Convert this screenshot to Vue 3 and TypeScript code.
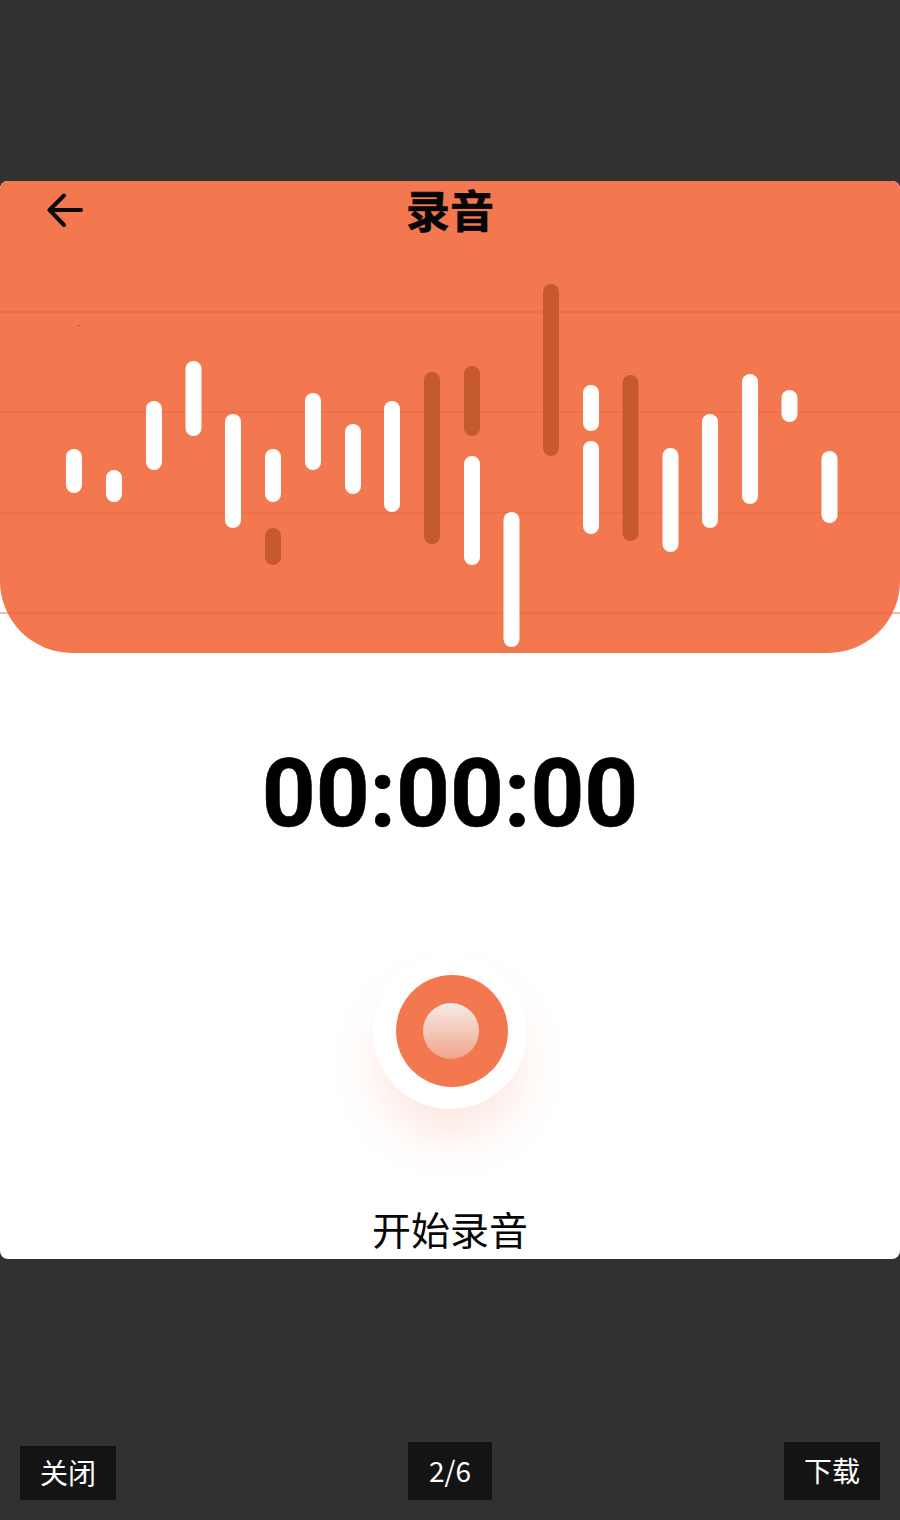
<script setup lang="ts">
// 波形柱：x 为左边，top / bottom 为画布内纵坐标，dark 表示深色柱
interface Bar {
  x: number
  top: number
  bottom: number
  dark?: boolean
}

const bars: Bar[] = [
  { x: 66, top: 268, bottom: 312 },
  { x: 106, top: 289, bottom: 321 },
  { x: 146, top: 220, bottom: 289 },
  { x: 185.5, top: 180, bottom: 255 },
  { x: 225, top: 233, bottom: 347 },
  { x: 265, top: 268, bottom: 321 },
  { x: 265, top: 347, bottom: 384, dark: true },
  { x: 305, top: 212, bottom: 289 },
  { x: 345, top: 243, bottom: 313 },
  { x: 384, top: 220, bottom: 331 },
  { x: 424, top: 191, bottom: 363, dark: true },
  { x: 464, top: 185, bottom: 255, dark: true },
  { x: 464, top: 275, bottom: 384 },
  { x: 503.5, top: 331, bottom: 466 },
  { x: 543, top: 103, bottom: 275, dark: true },
  { x: 583, top: 204, bottom: 250 },
  { x: 583, top: 260, bottom: 353 },
  { x: 622.5, top: 194, bottom: 360, dark: true },
  { x: 662.5, top: 267, bottom: 371 },
  { x: 702, top: 233, bottom: 347 },
  { x: 742, top: 193, bottom: 323 },
  { x: 781.5, top: 209, bottom: 241 },
  { x: 821.5, top: 270, bottom: 342 },
]

// 背景横线的纵坐标
const gridLines = [131, 231, 332, 432]
</script>

<template>
  <div class="page">
    <div class="card">
      <!-- 顶部波形区域 -->
      <section class="hero">
        <header class="nav">
          <svg class="back" viewBox="0 0 36 36" width="36" height="36" fill="none">
            <path d="M34 18H3M17 3.500L2.500 18L17 33" stroke="#0a0a0a" stroke-width="4" stroke-linecap="round" stroke-linejoin="round" />
          </svg>
          <h1 class="title">录音</h1>
        </header>
        <svg class="wave" viewBox="0 0 900 472" width="900" height="472">
          <line v-for="y in gridLines" :key="y" x1="0" x2="900" :y1="y" :y2="y" class="grid" />
          <rect
            v-for="(bar, i) in bars"
            :key="i"
            :x="bar.x"
            :y="bar.top"
            width="16"
            :height="bar.bottom - bar.top"
            rx="8"
            :fill="bar.dark ? '#c55a2c' : '#ffffff'"
          />
          <rect x="78" y="144" width="1" height="1" fill="#7a1030" />
        </svg>
      </section>

      <!-- 计时 -->
      <div class="timer">00:00:00</div>

      <!-- 录音按钮 -->
      <button class="record" type="button">
        <span class="ring"><span class="dot"></span></span>
      </button>
      <div class="label">开始录音</div>
    </div>

    <!-- 底部工具栏 -->
    <footer class="toolbar">
      <div class="tool tool-low">关闭</div>
      <div class="tool tool-count">2/6</div>
      <div class="tool">下载</div>
    </footer>
  </div>
</template>

<style scoped>
.page {
  box-sizing: border-box;
  height: 1520px;
  padding-top: 181px;
  background: #313131;
  display: flex;
  flex-direction: column;
  font-family: "Noto Sans CJK SC", "Liberation Sans", sans-serif;
}

.card {
  height: 1078px;
  background: #ffffff;
  border-radius: 8px;
  display: flex;
  flex-direction: column;
  align-items: center;
}

.hero {
  width: 900px;
  height: 472px;
  flex: none;
  background: #f4784f;
  border-radius: 8px 8px 72px 72px;
  position: relative;
}

.nav {
  position: relative;
  z-index: 1;
  height: 62px;
  display: flex;
  justify-content: center;
  align-items: center;
}

.back {
  position: absolute;
  left: 47px;
  top: 11px;
}

.title {
  margin: 0 0 6px;
  font-size: 44px;
  line-height: 56px;
  font-weight: 700;
  -webkit-text-stroke: 0.6px #050505;
  color: #050505;
}

.wave {
  position: absolute;
  left: 0;
  top: 0;
  overflow: visible;
}

.grid {
  stroke: #e9693f;
  stroke-width: 1.500;
  opacity: 0.6;
}

.timer {
  margin-top: 91px;
  height: 99px;
  line-height: 100px;
  font-family: Roboto, "Liberation Sans", sans-serif;
  font-size: 94px;
  font-weight: 700;
  -webkit-text-stroke: 0.6px #000000;
  color: #000000;
}

.record {
  margin-top: 112px;
  width: 154px;
  height: 154px;
  padding: 0;
  border: none;
  border-radius: 50%;
  background: #ffffff;
  box-shadow: 0 32px 50px -8px rgba(244, 120, 79, 0.2);
  display: flex;
  align-items: center;
  justify-content: center;
}

.ring {
  width: 112px;
  height: 112px;
  margin: -2px 0 0 3px;
  border-radius: 50%;
  background: #f4784f;
  display: flex;
  align-items: center;
  justify-content: center;
}

.dot {
  width: 56px;
  height: 56px;
  margin-left: -1px;
  border-radius: 50%;
  background: linear-gradient(180deg, #f6ebe6 0%, #f1a58c 100%);
}

.label {
  margin-top: 91px;
  font-size: 39px;
  line-height: 56px;
  color: #080808;
}

.toolbar {
  flex: 1;
  padding: 0 20px 20px;
  display: flex;
  justify-content: space-between;
  align-items: flex-end;
}

.tool {
  width: 96px;
  height: 58px;
  padding-bottom: 2px;
  box-sizing: border-box;
  background: #141414;
  color: #ffffff;
  font-size: 28px;
  display: flex;
  align-items: center;
  justify-content: center;
}

.tool-low {
  height: 54px;
}

.tool-count {
  width: 84px;
}
</style>

<style>
html,
body {
  margin: 0;
  background: #313131;
}
</style>
